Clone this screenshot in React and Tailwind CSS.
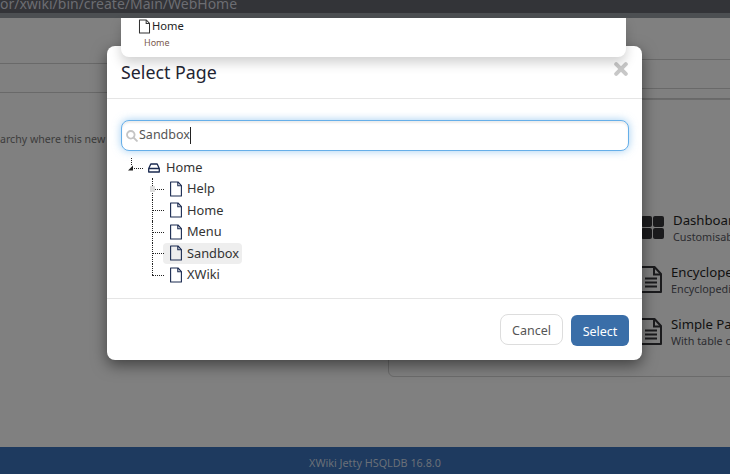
const font = { fontFamily: '"Noto Sans", sans-serif' };

function PageIcon({ className, size = 14 }) {
  return (
    <svg className={className} width={size} height={size + 2} viewBox="0 0 14 16" fill="none" stroke="currentColor" strokeWidth="1.100">
      <path d="M1.600 1v14h10.800V4.600L9 1z" strokeLinejoin="round" />
      <path d="M8.800 1v3.800h3.600" />
    </svg>
  );
}

function TemplateIcon() {
  return (
    <svg className="shrink-0" width="24" height="27" viewBox="0 0 24 27" fill="none" stroke="#1b1b1d" strokeWidth="2">
      <path d="M2 1h14.500l6.500 7v18H2z" strokeLinejoin="round" />
      <path d="M16 1v7.500h7M7 12.500h12M7 16.500h12M7 20.500h12" />
    </svg>
  );
}

function TreeRow({ label, active, first, last }) {
  return (
    <div className="flex items-center h-[21.500px] relative">
      <span className={`absolute left-[-11px] top-0 w-px border-l border-dotted border-[#222] ${last ? "h-[11px]" : "h-full"}`} />
      <span className="absolute left-[-11px] top-[10.500px] w-[12px] border-t border-dotted border-[#222]" />
      {first && <span className="absolute left-[-13px] top-[8px] w-[5px] h-[6px] bg-[#dddddd]" />}
      <div className={`flex items-center gap-[4px] h-[21px] pl-[6px] pr-[3px] rounded-[4px] ${active ? "bg-[#eeeeee]" : ""}`}>
        <PageIcon className="text-[#1a2a50] shrink-0" />
        <span className="text-[12.800px] text-[#333]">{label}</span>
      </div>
    </div>
  );
}

function Template({ title, desc, icon }) {
  return (
    <div className="flex items-center gap-[9px] h-[52px]">
      {icon}
      <div>
        <div className="text-[13.200px] leading-[18px] text-[#111] whitespace-nowrap">{title}</div>
        <div className="text-[10.800px] leading-[15px] text-[#2c2c30] whitespace-nowrap">{desc}</div>
      </div>
    </div>
  );
}

export default function App() {
  return (
    <div className="relative w-[730px] h-[474px] overflow-hidden bg-[#808080]" style={font}>
      {/* page behind the backdrop */}
      <div className="flex flex-col h-full">
        <div className="h-[13px] bg-[#333438] overflow-hidden text-[14px] leading-[7px] text-[#6c6d72] whitespace-nowrap -ml-[5px] pl-[5px] w-[735px]">
          or/xwiki/bin/create/Main/WebHome
        </div>
        <div className="h-[5px] bg-[#4c4f52]" />
        <div className="flex-1 flex min-h-0">
          <div className="w-[388px] shrink-0">
            <div className="h-[45px] border-b border-[#696969] box-content" />
            <div className="h-[28px] border-b border-[#696969] box-content" />
            <div className="pt-[37px] text-[10.600px] leading-[18px] text-[#3c3c3c] whitespace-nowrap">
              archy where this new
            </div>
          </div>
          <div className="flex-1 min-w-0">
            <div className="h-[41px] border-b border-[#696969] box-content" />
            <div className="h-[28px] border-b border-[#696969] box-content" />
            <div className="h-[9px] border-b border-[#696969] box-content" />
            <div className="h-[278px] -mr-[40px] border border-[#6b6b6b] rounded-[6px] pl-[249px] pt-[101px] overflow-hidden">
              <Template
                title="Dashboard"
                desc="Customisable"
                icon={
                  <div className="grid grid-cols-2 gap-px w-[23px] ml-[3px] shrink-0">
                    <span className="h-[11px] rounded-[2px] bg-[#1b1b1d]" />
                    <span className="h-[11px] rounded-[2px] bg-[#1b1b1d]" />
                    <span className="h-[11px] rounded-[2px] bg-[#1b1b1d]" />
                    <span className="h-[11px] rounded-[2px] bg-[#1b1b1d]" />
                  </div>
                }
              />
              <Template title="Encyclopedia" desc="Encyclopedia" icon={<TemplateIcon />} />
              <Template title="Simple Page" desc="With table of" icon={<TemplateIcon />} />
            </div>
          </div>
        </div>
        <div className="h-[27px] bg-[#1e3a5f] text-center text-[10.800px] leading-[31px] text-[#6a7078] pl-[20px]">
          XWiki Jetty HSQLDB 16.8.0
        </div>
      </div>

      {/* modal */}
      <div className="absolute left-[107px] top-[46px] w-[535px] h-[314px] bg-white rounded-[8px] shadow-[0_5px_15px_rgba(0,0,0,0.5)] flex flex-col">
        <div className="h-[52px] shrink-0 border-b border-[#e5e5e5] box-content flex items-center justify-between pl-[14px] pr-[14px]">
          <h4 className="text-[17.800px] text-[#1f2533]">Select Page</h4>
          <svg className="mt-[-7px]" width="14" height="14" viewBox="0 0 14 14" stroke="#c8c8c8" strokeWidth="4" strokeLinecap="round">
            <path d="M2.200 2.200l9.600 9.600M11.800 2.200l-9.600 9.600" />
          </svg>
        </div>
        <div className="flex-1 min-h-0 pl-[14px] pr-[13px] pt-[21px]">
          <div className="h-[31px] rounded-[8px] border border-[#66afe9] shadow-[inset_0_2px_2px_rgba(0,0,0,0.075),0_0_8px_rgba(102,175,233,0.6)] flex items-center pl-[4px] bg-white">
            <svg width="12" height="12" viewBox="0 0 12 12" fill="none" stroke="#c4c4c4" strokeWidth="1.800">
              <circle cx="4.800" cy="4.800" r="3.800" />
              <path d="M7.500 7.500L11.500 11.500" />
            </svg>
            <span className="text-[12.500px] text-[#555] ml-[1px]">Sandbox</span>
            <span className="w-px h-[17px] bg-[#222]" />
          </div>
          <div className="mt-[6px] ml-[6px]">
            <div className="flex items-center h-[21px]">
              <svg className="mr-[1px] overflow-visible" width="20" height="16" viewBox="0 0 20 16" fill="none">
                <path d="M4.500 -2v7" stroke="#222" strokeDasharray="1 1" />
                <path d="M1 10.500L6 5.500v5z" fill="#222" />
                <path d="M7 8.500h9" stroke="#222" strokeDasharray="1 1" />
              </svg>
              <svg className="text-[#1a2a50]" width="12" height="10" viewBox="0 0 12 10" fill="none" stroke="currentColor" strokeWidth="1.300">
                <path d="M.7 5.500L2.800 1h6.400l2.100 4.500V9H.7zM.7 5.500h10.600" strokeLinejoin="round" />
              </svg>
              <span className="ml-[6px] text-[12.800px] text-[#333]">Home</span>
            </div>
            <div className="ml-[36px] flex flex-col items-start">
              <TreeRow label="Help" first />
              <TreeRow label="Home" />
              <TreeRow label="Menu" />
              <TreeRow label="Sandbox" active />
              <TreeRow label="XWiki" last />
            </div>
          </div>
        </div>
        <div className="h-[45px] shrink-0 border-t border-[#e5e5e5] box-content flex items-start justify-end gap-[8px] pr-[13px] pt-[16px]">
          <button className="w-[63px] h-[31px] rounded-[8px] border border-[#dddddd] bg-white text-[12.500px] text-[#555] mt-[-1px] pt-[3px]">Cancel</button>
          <button className="w-[58px] h-[31px] rounded-[6px] bg-[#3a6ea8] text-[12.500px] text-white pt-[3px]">Select</button>
        </div>
      </div>

      {/* suggest dropdown over the modal */}
      <div className="absolute left-[121px] top-[18px] w-[505px] h-[39px] bg-white rounded-b-[8px] shadow-[0_6px_12px_rgba(0,0,0,0.18)] pl-[17px]">
        <div className="flex items-center gap-[1px] h-[16px]">
          <PageIcon className="text-[#333] shrink-0" size={13} />
          <span className="text-[11.200px] text-[#222]">Home</span>
        </div>
        <div className="ml-[6px] mt-[1px] text-[9px] leading-[16px] text-[#7a5a50]">Home</div>
      </div>
    </div>
  );
}
